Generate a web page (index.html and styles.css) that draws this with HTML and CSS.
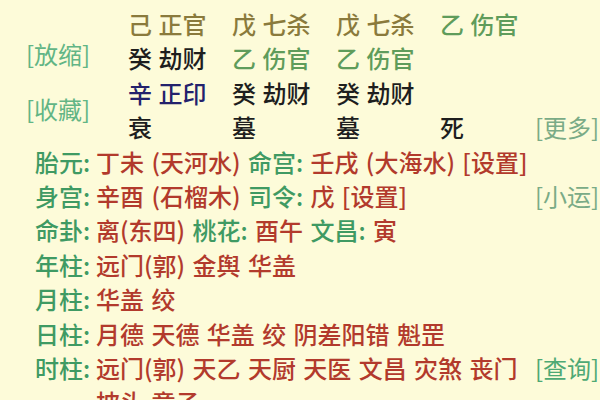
FILE: index.html
```html
<!DOCTYPE html>
<html lang="zh-CN">
<head>
<meta charset="utf-8">
<link rel="stylesheet" href="styles.css">
</head>
<body>
<div class="page">
  <section class="top">
    <div class="side">
      <span class="btn">[放缩]</span>
      <span class="btn">[收藏]</span>
    </div>
    <div class="grid">
      <span class="olive">己 正官</span>
      <span class="olive">戊 七杀</span>
      <span class="olive">戊 七杀</span>
      <span class="green">乙 伤官</span>
      <span></span>

      <span class="black">癸 劫财</span>
      <span class="green">乙 伤官</span>
      <span class="green">乙 伤官</span>
      <span></span>
      <span></span>

      <span class="navy">辛 正印</span>
      <span class="black">癸 劫财</span>
      <span class="black">癸 劫财</span>
      <span></span>
      <span></span>

      <span class="black">衰</span>
      <span class="black">墓</span>
      <span class="black">墓</span>
      <span class="black">死</span>
      <span class="more">[更多]</span>
    </div>
  </section>

  <section class="info">
    <div class="row">
      <span class="lb">胎元:</span>
      <span class="val">丁未 (天河水) <span class="k">命宫:</span> 壬戌 (大海水) [设置]</span>
      <span></span>
    </div>
    <div class="row">
      <span class="lb">身宫:</span>
      <span class="val">辛酉 (石榴木) <span class="k">司令:</span> 戊 [设置]</span>
      <span class="more">[小运]</span>
    </div>
    <div class="row">
      <span class="lb">命卦:</span>
      <span class="val">离(东四) <span class="k">桃花:</span> 酉午 <span class="k">文昌:</span> 寅</span>
      <span></span>
    </div>
    <div class="row">
      <span class="lb">年柱:</span>
      <span class="val">远门(郭) 金舆 华盖</span>
      <span></span>
    </div>
    <div class="row">
      <span class="lb">月柱:</span>
      <span class="val">华盖 绞</span>
      <span></span>
    </div>
    <div class="row">
      <span class="lb">日柱:</span>
      <span class="val">月德 天德 华盖 绞 阴差阳错 魁罡</span>
      <span></span>
    </div>
    <div class="row">
      <span class="lb">时柱:</span>
      <span class="val">远门(郭) 天乙 天厨 天医 文昌 灾煞 丧门 披头 童子</span>
      <span class="query">[查询]</span>
    </div>
  </section>
</div>
</body>
</html>
```

FILE: styles.css
```css
html, body {
  margin: 0;
  padding: 0;
}

body {
  background: #fdfbd9;
  font-family: "Noto Sans CJK SC", "Noto Sans", sans-serif;
  font-size: 24px;
  font-weight: 500;
  line-height: 34.4px;
  color: #1e1e1e;
  overflow: hidden;
}

.page {
  padding: 7px 10px 0 0;
}

.top {
  display: flex;
}

.side {
  width: 128px;
  padding-left: 26px;
  padding-top: 30px;
  box-sizing: border-box;
  display: flex;
  flex-direction: column;
  gap: 20.6px;
  flex: none;
}

.btn {
  color: #62b585;
  font-weight: 400;
  white-space: nowrap;
}

.grid {
  display: grid;
  grid-template-columns: 104px 104px 104px 95px auto;
  word-spacing: 1px;
}

.grid span {
  white-space: nowrap;
}

.olive { color: #8a7a3c; }
.green { color: #5f9c5b; }
.black { color: #1e1e1e; }
.navy  { color: #23216c; }

.more {
  color: #7aab86;
  font-weight: 400;
  white-space: nowrap;
}

.info {
  padding-left: 35px;
}

.row {
  display: grid;
  grid-template-columns: 63px 1fr 55px;
  column-gap: 0;
  align-items: start;
}

.lb {
  color: #3f9a63;
  white-space: nowrap;
}

.val {
  color: #b23a2c;
  word-spacing: 2px;
  word-break: keep-all;
  margin-left: -2px;
}

.k {
  color: #3f9a63;
}

.query {
  color: #4ea974;
  font-weight: 400;
  white-space: nowrap;
}
```
